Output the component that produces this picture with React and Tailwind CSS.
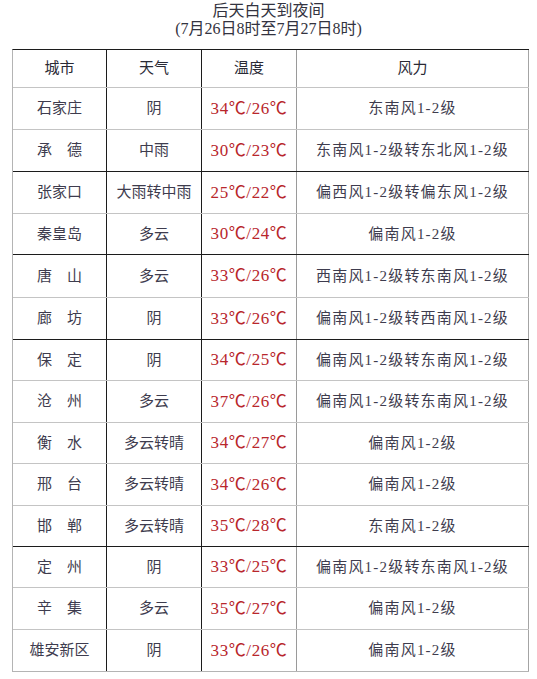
import React from "react";

const rows = [
  { city: "石家庄", weather: "阴", temp: "34℃/26℃", wind: "东南风1-2级", h: "h-[42px]", line: "border-[#c4c4c4]" },
  { city: "承　德", weather: "中雨", temp: "30℃/23℃", wind: "东南风1-2级转东北风1-2级", h: "h-[42px]", line: "border-[#1c1c1c]" },
  { city: "张家口", weather: "大雨转中雨", temp: "25℃/22℃", wind: "偏西风1-2级转偏东风1-2级", h: "h-[42px]", line: "border-[#c4c4c4]" },
  { city: "秦皇岛", weather: "多云", temp: "30℃/24℃", wind: "偏南风1-2级", h: "h-[41px]", line: "border-[#1c1c1c]" },
  { city: "唐　山", weather: "多云", temp: "33℃/26℃", wind: "西南风1-2级转东南风1-2级", h: "h-[43px]", line: "border-[#c4c4c4]" },
  { city: "廊　坊", weather: "阴", temp: "33℃/26℃", wind: "偏南风1-2级转西南风1-2级", h: "h-[42px]", line: "border-[#1c1c1c]" },
  { city: "保　定", weather: "阴", temp: "34℃/25℃", wind: "偏南风1-2级转东南风1-2级", h: "h-[41px]", line: "border-[#c4c4c4]" },
  { city: "沧　州", weather: "多云", temp: "37℃/26℃", wind: "偏南风1-2级转东南风1-2级", h: "h-[42px]", line: "border-[#c4c4c4]" },
  { city: "衡　水", weather: "多云转晴", temp: "34℃/27℃", wind: "偏南风1-2级", h: "h-[41px]", line: "border-[#c4c4c4]" },
  { city: "邢　台", weather: "多云转晴", temp: "34℃/26℃", wind: "偏南风1-2级", h: "h-[42px]", line: "border-[#c4c4c4]" },
  { city: "邯　郸", weather: "多云转晴", temp: "35℃/28℃", wind: "东南风1-2级", h: "h-[41px]", line: "border-[#1c1c1c]" },
  { city: "定　州", weather: "阴", temp: "33℃/25℃", wind: "偏南风1-2级转东南风1-2级", h: "h-[41px]", line: "border-[#c4c4c4]" },
  { city: "辛　集", weather: "多云", temp: "35℃/27℃", wind: "偏南风1-2级", h: "h-[42px]", line: "border-[#c4c4c4]" },
  { city: "雄安新区", weather: "阴", temp: "33℃/26℃", wind: "偏南风1-2级", h: "h-[42px]", line: "border-[#b4b4b4]" },
];

const font = { fontFamily: '"Liberation Serif", "Noto Sans CJK SC", serif' };

function Row({ r }) {
  return (
    <div className={`flex ${r.h} border-b ${r.line}`}>
      <div className="w-[94px] border-r border-[#1c1c1c] flex items-center justify-center">{r.city}</div>
      <div className="w-[95px] border-r border-[#1c1c1c] flex items-center justify-center">{r.weather}</div>
      <div className="w-[95px] border-r border-[#9a9a9a] flex items-center justify-center text-[#b8262c] text-[17px] tracking-[0.6px]">{r.temp}</div>
      <div className="w-[232px] border-r border-[#a4a4a4] flex items-center justify-center tracking-[1.2px]">{r.wind}</div>
    </div>
  );
}

export default function App() {
  return (
    <div className="w-[537px] h-[679px] bg-white text-[#3e3c4e] text-[15px]" style={font}>
      <div className="h-[49px] pt-[2px] flex flex-col items-center text-[#333340] text-[16px] leading-[18px]">
        <div>后天白天到夜间</div>
        <div>(7月26日8时至7月27日8时)</div>
      </div>
      <div className="ml-[12px] w-[517px] border-l border-t border-l-[#b4b4b4] border-t-[#1c1c1c]">
        <div className="flex h-[38px] border-b border-[#c4c4c4] text-[#2a2a35] text-[15px]">
          <div className="w-[94px] border-r border-[#1c1c1c] flex items-center justify-center">城市</div>
          <div className="w-[95px] border-r border-[#1c1c1c] flex items-center justify-center">天气</div>
          <div className="w-[95px] border-r border-[#9a9a9a] flex items-center justify-center">温度</div>
          <div className="w-[232px] border-r border-[#a4a4a4] flex items-center justify-center">风力</div>
        </div>
        {rows.map((r) => (
          <Row key={r.city} r={r} />
        ))}
      </div>
    </div>
  );
}
